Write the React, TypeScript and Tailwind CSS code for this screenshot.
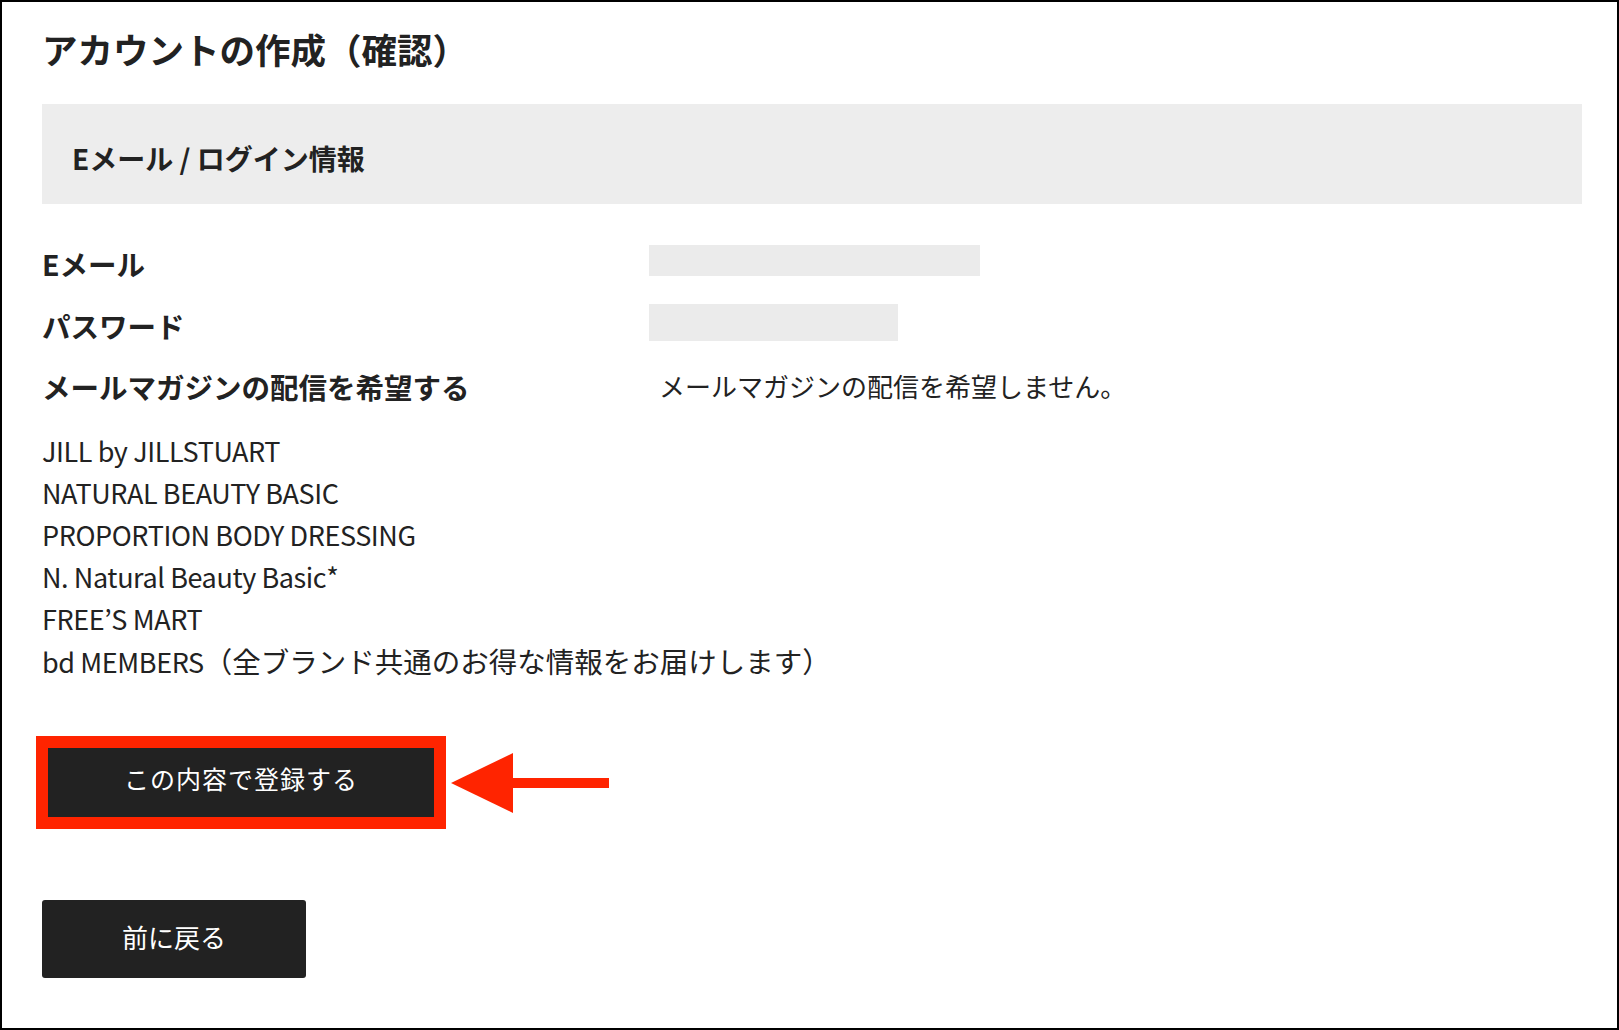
const font = { fontFamily: '"Noto Sans CJK JP", "Noto Sans", sans-serif' };

const brands: [string, string][] = [
  ["JILL by JILLSTUART", ""],
  ["NATURAL BEAUTY BASIC", ""],
  ["PROPORTION BODY DRESSING", ""],
  ["N. Natural Beauty Basic*", ""],
  ["FREE’S MART", ""],
  ["bd MEMBERS", "（全ブランド共通のお得な情報をお届けします）"],
];

const App = () => {
  return (
    <div
      className="h-[1030px] w-[1619px] border-2 border-black bg-white text-[#222]"
      style={font}
    >
      <div className="pl-[40px] pr-[35px]">
        <h1 className="mt-[25px] text-[35.5px] font-bold leading-[44px]">
          アカウントの作成（確認）
        </h1>

        <div className="mt-[33px] flex h-[100px] items-center bg-[#ededed] pl-[30px] pt-[8px]">
          <h2 className="text-[28px] font-bold">Eメール / ログイン情報</h2>
        </div>

        <div className="mt-[29px] grid grid-cols-[607px_1fr]">
          <div className="flex h-[62px] items-center text-[28.5px] font-bold">Eメール</div>
          <div className="flex h-[62px] items-center">
            <div className="-mt-[8px] h-[31px] w-[331px] bg-[#ebebeb]" />
          </div>
          <div className="flex h-[62px] items-center text-[28.5px] font-bold">パスワード</div>
          <div className="flex h-[62px] items-center">
            <div className="-mt-[8px] h-[37px] w-[249px] bg-[#ebebeb]" />
          </div>
          <div className="flex h-[62px] items-center pb-[2px] text-[28.5px] font-bold">
            メールマガジンの配信を希望する
          </div>
          <div className="flex h-[62px] items-center pb-[6px] pl-[10px] text-[26px]">
            メールマガジンの配信を希望しません。
          </div>
        </div>

        <ul className="mt-[11px] text-[27px] leading-[42px]">
          {brands.map(([en, ja]) => (
            <li key={en}>
              <span className="tracking-[-0.015em]">{en}</span>
              {ja && <span className="text-[28.5px]">{ja}</span>}
            </li>
          ))}
        </ul>

        <div className="mt-[53px] flex items-center gap-[5px]">
          <div className="-ml-[6px] border-[12px] border-[#ff2400]">
            <button className="flex h-[69px] w-[386px] items-center justify-center bg-[#222] pb-[7px] text-[25px] tracking-[0.04em] text-white">
              この内容で登録する
            </button>
          </div>
          <svg width="158" height="60" viewBox="0 0 158 60">
            <polygon points="0,30 62,0 62,60" fill="#ff2400" />
            <rect x="60" y="25" width="98" height="10" fill="#ff2400" />
          </svg>
        </div>

        <button className="mt-[71px] flex h-[78px] w-[264px] items-center justify-center rounded-[3px] bg-[#222] pb-[5px] text-[26px] text-white">
          前に戻る
        </button>
      </div>
    </div>
  );
};

export default App;
